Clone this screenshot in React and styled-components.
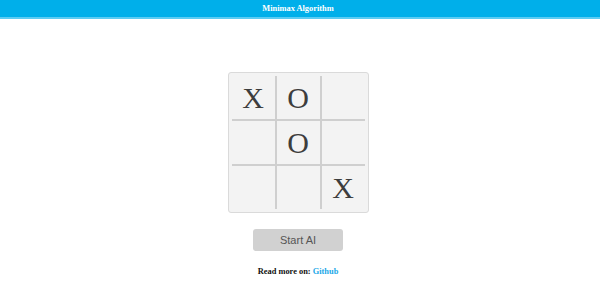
import React, { useState } from "react";
import styled, { createGlobalStyle } from "styled-components";

const GlobalStyle = createGlobalStyle`
  html, body {
    margin: 0;
    padding: 0;
    background: #ffffff;
  }
`;

const Page = styled.div`
  display: flex;
  flex-direction: column;
  align-items: center;
  min-height: 283px;
`;

const Header = styled.header`
  width: 100%;
  height: 19px;
  background: #00afea;
  border-bottom: 2px solid #5cccf3;
  display: flex;
  align-items: center;
  justify-content: center;
  padding-right: 4px;
  box-sizing: border-box;
`;

const Title = styled.h1`
  margin: 0;
  font-family: "Liberation Serif", "Times New Roman", serif;
  font-weight: bold;
  font-size: 8.4px;
  color: #ffffff;
`;

const Content = styled.main`
  display: flex;
  flex-direction: column;
  align-items: center;
  padding-top: 53px;
  padding-right: 4px;
`;

const Board = styled.div`
  padding: 3px;
  background: #f3f3f3;
  border: 1px solid #dadada;
  border-radius: 3px;
`;

const Grid = styled.div`
  display: grid;
  grid-template-columns: repeat(3, 43px);
  grid-template-rows: repeat(3, 43px);
  gap: 2px;
  background: #cfcfcf;
`;

const Cell = styled.button`
  border: none;
  padding: 0;
  margin: 0;
  background: #f3f3f3;
  display: flex;
  align-items: center;
  justify-content: center;
  font-family: "Liberation Serif", "Times New Roman", serif;
  font-size: 30px;
  line-height: 1;
  color: #3d3d3d;
  cursor: pointer;
`;

const StartButton = styled.button`
  margin-top: 16px;
  width: 90px;
  height: 22px;
  border: none;
  border-radius: 3px;
  background: #d1d1d1;
  color: #555555;
  font-family: "Liberation Sans", Arial, sans-serif;
  font-size: 11px;
  cursor: pointer;
`;

const Footer = styled.p`
  margin: 16px 0 0;
  font-family: "Liberation Serif", "Times New Roman", serif;
  font-weight: bold;
  font-size: 8.4px;
  color: #111111;
`;

const Link = styled.a`
  color: #1aa8e8;
  text-decoration: none;
`;

const initialBoard = ["X", "O", "", "", "O", "", "", "", "X"];

export default function App() {
  const [cells, setCells] = useState(initialBoard);

  const play = (index) => {
    if (cells[index]) return;
    const next = [...cells];
    next[index] = "X";
    setCells(next);
  };

  return (
    <>
      <GlobalStyle />
      <Page>
        <Header>
          <Title>Minimax Algorithm</Title>
        </Header>
        <Content>
          <Board>
            <Grid>
              {cells.map((value, index) => (
                <Cell key={index} onClick={() => play(index)}>
                  {value}
                </Cell>
              ))}
            </Grid>
          </Board>
          <StartButton onClick={() => setCells(initialBoard)}>Start AI</StartButton>
          <Footer>
            Read more on: <Link href="#">Github</Link>
          </Footer>
        </Content>
      </Page>
    </>
  );
}
